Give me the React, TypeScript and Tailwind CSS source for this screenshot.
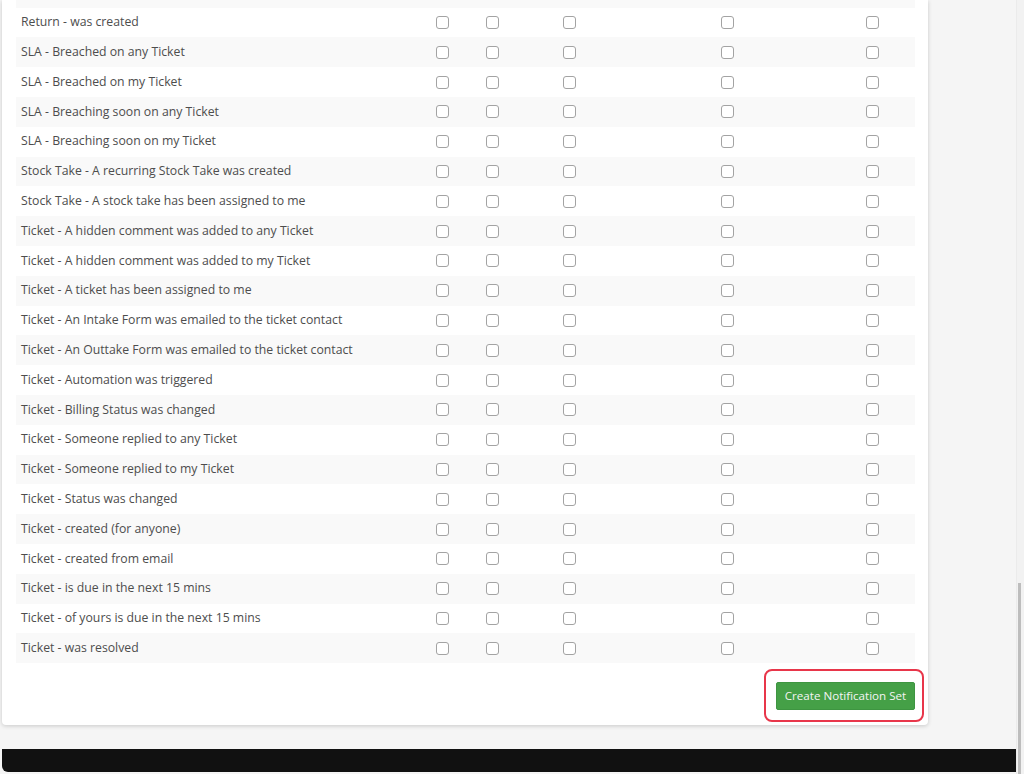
import React from 'react';

// Notification events shown in the (scrolled) table
const events: string[] = [
  'Return - was created',
  'SLA - Breached on any Ticket',
  'SLA - Breached on my Ticket',
  'SLA - Breaching soon on any Ticket',
  'SLA - Breaching soon on my Ticket',
  'Stock Take - A recurring Stock Take was created',
  'Stock Take - A stock take has been assigned to me',
  'Ticket - A hidden comment was added to any Ticket',
  'Ticket - A hidden comment was added to my Ticket',
  'Ticket - A ticket has been assigned to me',
  'Ticket - An Intake Form was emailed to the ticket contact',
  'Ticket - An Outtake Form was emailed to the ticket contact',
  'Ticket - Automation was triggered',
  'Ticket - Billing Status was changed',
  'Ticket - Someone replied to any Ticket',
  'Ticket - Someone replied to my Ticket',
  'Ticket - Status was changed',
  'Ticket - created (for anyone)',
  'Ticket - created from email',
  'Ticket - is due in the next 15 mins',
  'Ticket - of yours is due in the next 15 mins',
  'Ticket - was resolved',
];

function Box() {
  return (
    <div className="flex items-center justify-center">
      <span className="block w-[13px] h-[13px] rounded-[3px] border border-[#a3a3a3] bg-white" />
    </div>
  );
}

function EventRow({ label, striped }: { label: string; striped: boolean }) {
  return (
    <div
      className={`grid grid-cols-[401px_50px_50px_104px_212px_78px_1fr] items-center h-[29.8px] ${
        striped ? 'bg-[#f9f9f9]' : 'bg-white'
      }`}
    >
      <div className="pl-[5px] text-[12.25px] text-[#4d4d4d] whitespace-nowrap">{label}</div>
      <Box />
      <Box />
      <Box />
      <Box />
      <Box />
      <div />
    </div>
  );
}

export default function App() {
  return (
    <div
      className="w-[1024px] h-[774px] bg-[#f5f5f5] flex overflow-hidden"
      style={{ fontFamily: '"Open Sans", "Liberation Sans", sans-serif' }}
    >
      <div className="w-[1016px] flex flex-col">
        {/* card */}
        <div className="ml-[2px] w-[926px] bg-white rounded-b-[4px] shadow-[0_1px_4px_rgba(0,0,0,0.18)] pl-[14px] pr-[13px]">
          <div className="h-[7.6px] bg-[#f9f9f9]" />
          {events.map((e, i) => (
            <EventRow key={e} label={e} striped={i % 2 === 1} />
          ))}
          <div className="relative flex justify-end pt-[19px] pb-[15px]">
            <button className="h-[28px] w-[139px] rounded-[2px] bg-[#45a047] text-[11.6px] text-[#f4f4f4] border border-[#3e9541]">
              Create Notification Set
            </button>
            <div className="absolute right-[-9px] top-[6px] w-[160px] h-[53px] rounded-[8px] border-2 border-[#e8364a]" />
          </div>
        </div>
        <div className="h-[24px]" />
        <div className="ml-[2px] h-[23px] bg-[#111111] rounded-bl-[6px]" />
      </div>
      {/* scrollbar */}
      <div className="w-[8px] flex flex-col bg-[#f2f2f2] border-l border-[#ebebeb]">
        <div className="h-[583px]" />
        <div className="ml-[1px] w-[3px] flex-1 bg-[#bdbdbd]" />
      </div>
    </div>
  );
}
